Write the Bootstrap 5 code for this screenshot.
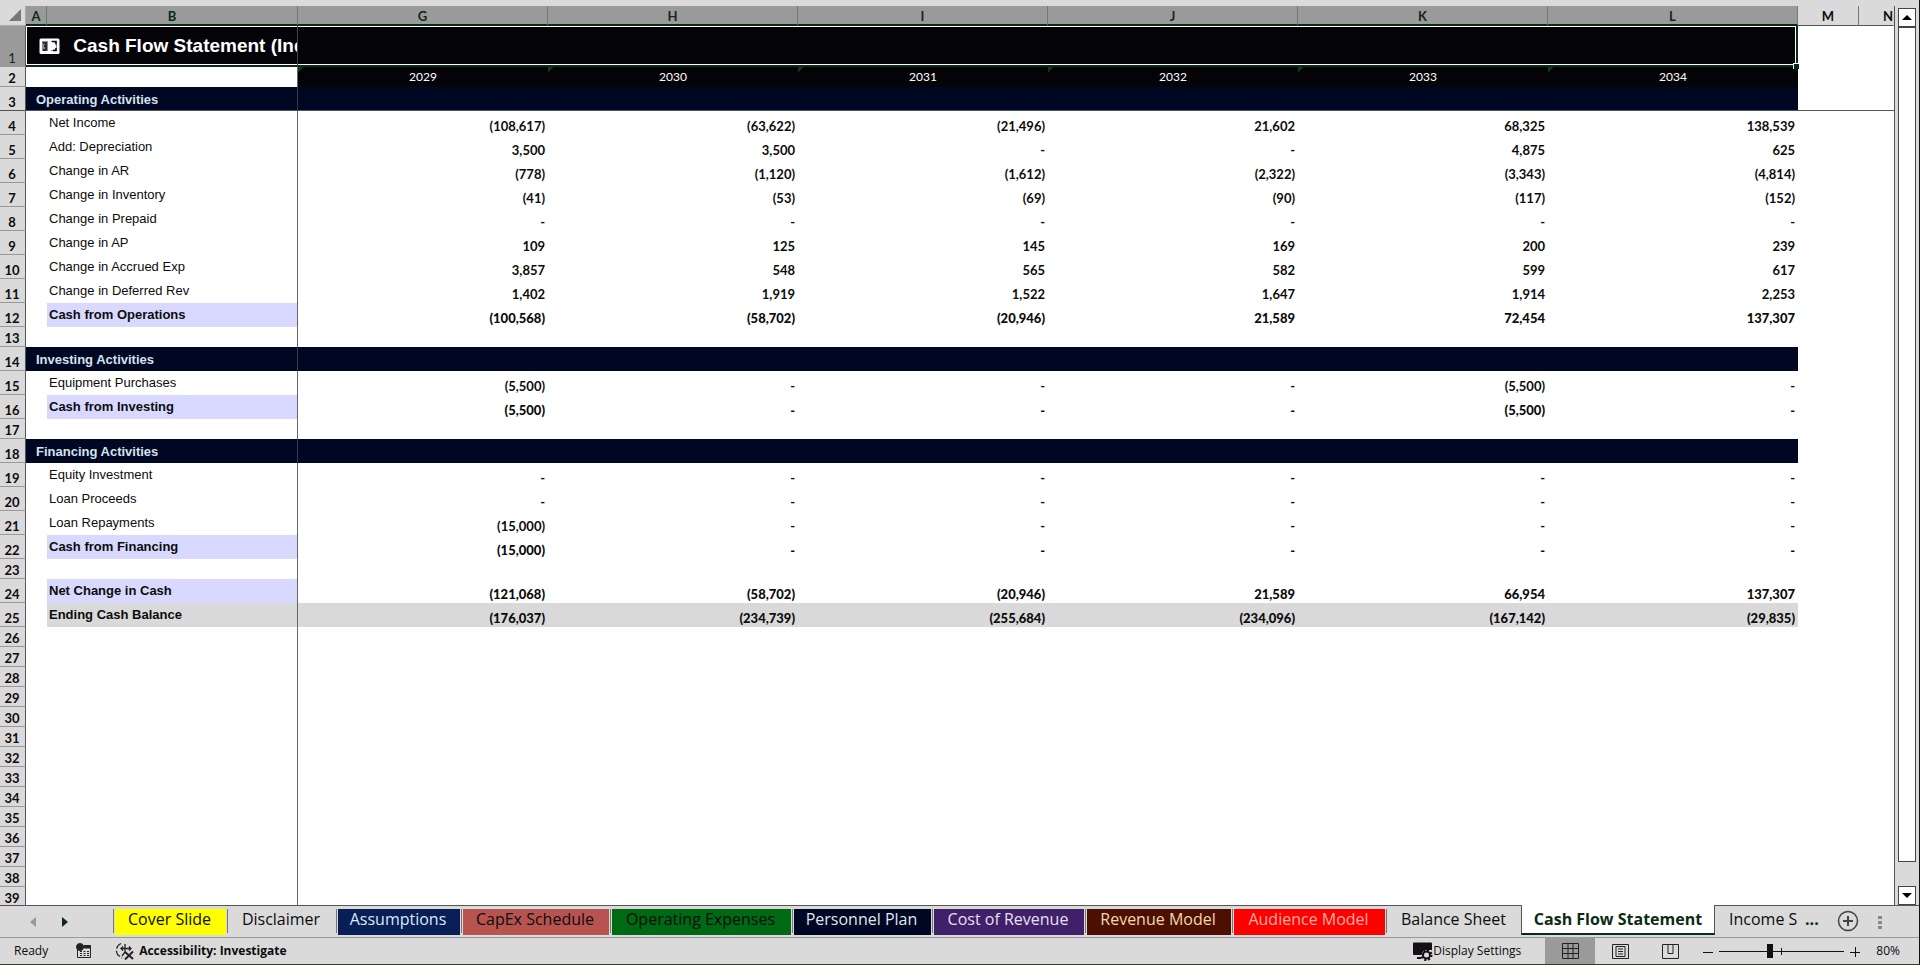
<!DOCTYPE html>
<html lang="en">
<head>
<meta charset="utf-8">
<meta name="viewport" content="width=device-width, initial-scale=1">
<title>Cash Flow Statement</title>
<link href="https://cdn.jsdelivr.net/npm/bootstrap@5.3.0/dist/css/bootstrap.min.css" rel="stylesheet">
<style>
body{background:#dadada;color:#0c0c0c;font-family:"Open Sans","Noto Sans",sans-serif;line-height:1}
.app{height:100vh;border-bottom:1px solid #3c3c1e;border-right:1px solid #111}
.strip{height:6px}
.grid-pane{min-height:0}
.sheet-view{min-width:0}
.sheet-body{width:100%;table-layout:fixed;border-collapse:separate;border-spacing:0;background:#fff;font:700 13px/16px Lato,sans-serif}
.sheet-body th,.sheet-body td{padding:0;white-space:nowrap;overflow:hidden}
.c-num{width:26px}.c-a{width:21px}.c-b{width:251px}.c-m{width:61px}.c-n{width:35px}
.sheet-body thead th{height:20px;background:#dadada;border-right:1px solid #777;border-bottom:1px solid #555;text-align:center;line-height:17px;vertical-align:bottom}
.sheet-body thead th.sel{background:#9a9a9a;color:#0b2b14;border-bottom:2px solid #0b2b14;line-height:16px}
.sheet-body thead th:last-child{border-right:1px solid #dadada}
.sheet-body thead th.corner{border-right-color:#aaa;border-bottom-color:#aaa}
.sheet-body tbody th{background:#dadada;border-right:1px solid #555;border-bottom:1px solid #999;text-align:center;vertical-align:bottom;line-height:15px;padding-right:1px}
.sheet-body .title-row th{background:#9a9a9a;color:#0b2b14;font-weight:400}
.sheet-body tbody tr{height:24px}
.sheet-body tbody tr.gap-row{height:20px}
.sheet-body tbody tr.title-row{height:41px}
.sheet-body tbody td{text-align:right;vertical-align:bottom;padding:0 3px 1px 0;line-height:15px}
.sheet-body tbody td.lbl{font:400 13px/16px "Liberation Sans",sans-serif;text-align:left;vertical-align:top;padding:4px 0 0 2px}
.sheet-body .b-edge{border-right:1px solid #666}
.sheet-body .total td.lbl,.sheet-body .ending td.lbl{font-weight:700}
.sheet-body .total td.lbl{background:#d9d9ff}
.sheet-body .total td.n,.sheet-body .ending td.n{font-weight:900}
.sheet-body .ending td.lbl,.sheet-body .ending td.n{background:#d9d9d9}
.sheet-body .band td.n,.sheet-body .band td.band-title{background:#000722}
.sheet-body tbody td.band-title{font:700 13px/16px "Liberation Sans",sans-serif;color:#d5e2ee;text-align:left;vertical-align:top;padding:5px 0 0 10px;border-right-color:#333a50}
.sheet-body .freeze td,.sheet-body .freeze th{border-bottom:1px solid #555}
.sheet-body .title-row td.t{background:#040308;border-bottom:2px solid #0b2b14;box-shadow:inset 0 1px #fff,inset 0 -1px #fff}
.sheet-body tbody .title-row td.t-first,.sheet-body tbody td.t-first{box-shadow:inset 1px 1px #fff,inset 0 -1px #fff;border-right-color:#444;padding:0 0 0 13px;text-align:left;vertical-align:middle;color:#fff;font:700 19px/24px "Liberation Sans",sans-serif}
.sheet-body .title-row td.t-last{box-shadow:inset 0 1px #fff,inset -1px -1px #fff;border-right:2px solid #0b2b14;overflow:visible}
.sheet-body tbody .years td.n{background:#040308 linear-gradient(135deg,#0b3b18 4px,transparent 4px);color:#fff;font:400 12px/18px Lato,sans-serif;text-align:center;vertical-align:middle;padding:0}
.fill-handle{right:-3px;bottom:-4px;width:6px;height:6px;background:#0b2b14;border:1px solid #fff;border-width:1px 0 0 1px;z-index:1}
.vbar{width:25px;padding:2px 3px 0 3px;border-left:1px solid #555}
.vbar button{height:19px;border:1px solid #444;background:#fff}
.thumb{border:1px solid #444;background:#fff;flex:0 1 835px}
.tabbar{height:32px;border-top:1px solid #555;padding-left:112px;font-size:16px}
.tabbar .tab{height:26px;margin:3px 0 0;border:0;background:transparent;color:#0c0c0c;white-space:nowrap;line-height:20px;padding:0 2px 6px 0;text-align:center;flex-shrink:0}
.sep{width:1px;height:24px;margin:3px 1px 0 1px;background:#777;flex-shrink:0}
.navs{left:26px;top:11px;width:46px}
.tabbar .w-cover{width:111px;background:#ff0}
.tabbar .w-disc{width:106px}
.tabbar .w-assu{width:122px;background:#081e54;color:#dbe8f8}
.tabbar .w-cap{width:146px;background:#b85450}
.tabbar .w-op{width:179px;background:#006914}
.tabbar .w-pers{width:137px;background:#000722;color:#dfe6f0}
.tabbar .w-cost{width:150px;background:#402068;color:#e4e0f0}
.tabbar .w-rev{width:144px;background:#4c0f00;color:#f0d8b0}
.tabbar .w-aud{width:151px;background:#f00;color:#ffb0a0}
.tabbar .w-bal{width:133px}
.tabbar .w-cash{width:194px;margin-top:-1px;height:30px;background:#fff;border:1px solid #555;border-top:0;border-bottom:2px solid #0b2b14;color:#0b2b14;font-weight:700;line-height:27px;padding:0}
.tabbar .w-inc{width:82px;padding-left:14px;overflow:hidden;text-align:left}
.tabbar .more{color:#0b2b14;font-weight:700}
.statusbar{height:27px;border-top:1px solid #999;font-size:12px;padding:0 19px 0 14px}
.statusbar button{border:0;background:transparent;padding:0;color:inherit;height:26px;white-space:nowrap}
.statusbar .view{width:50px}
.statusbar .view.on{background:#9a9a9a}
.statusbar .rec{margin-left:28px}
.statusbar .acc{margin-left:23px}
.zoomer{appearance:none;width:125px;height:14px;margin:0 6px;background:linear-gradient(#111,#111) 62px 50%/1px 7px no-repeat,linear-gradient(#111,#111) 0 50%/100% 1px no-repeat}
.zoomer::-webkit-slider-thumb{appearance:none;width:6px;height:14px;background:#111}
</style>
</head>
<body>
<div class="app d-flex flex-column overflow-hidden">
  <div class="strip flex-shrink-0"></div>
  <main class="grid-pane d-flex flex-grow-1">
    <div class="sheet-view flex-grow-1 overflow-hidden bg-white">
      <table class="sheet-body">
        <colgroup><col class="c-num"><col class="c-a"><col class="c-b"><col><col><col><col><col><col><col class="c-m"><col class="c-n"></colgroup>
        <thead><tr>
          <th class="corner"><svg class="d-block ms-auto me-1 mb-1" width="12" height="12"><path d="M12 0V12H0z" fill="#777"/></svg></th>
          <th class="sel">A</th><th class="sel">B</th><th class="sel">G</th><th class="sel">H</th><th class="sel">I</th><th class="sel">J</th><th class="sel">K</th><th class="sel">L</th><th>M</th><th class="text-end">N</th>
        </tr></thead>
        <tbody id="rows">
          <tr class="title-row"><th>1</th>
            <td class="t t-first b-edge" colspan="2"><svg class="me-2 align-middle" width="21" height="17" viewBox="0 0 21 17"><rect x=".5" y=".5" width="20" height="15.500" rx="1.500" fill="#fff"/><path d="M3 3h6v10H3zM12 3h6v10h-6z" fill="#8a8a8a"/><path d="M11 4h2a4 4 0 0 1 0 8h-2z" fill="#fff"/><path d="M4 5h3v3H5M7 8v4H4M13 3.500h4v3M17 10v2.500h-3" fill="none" stroke="#111" stroke-width="1.500"/></svg> Cash Flow Statement (Ind</td>
            <td class="t"></td><td class="t"></td><td class="t"></td><td class="t"></td><td class="t"></td><td class="t t-last position-relative"><i class="fill-handle position-absolute"></i></td><td></td><td></td></tr>
        </tbody>
      </table>
    </div>
    <div class="vbar d-flex flex-column flex-shrink-0">
      <button class="p-0 d-flex flex-shrink-0 align-items-center justify-content-center" aria-label="Scroll up"><svg width="10" height="6"><path d="M5 0l5 5H0z"/></svg></button>
      <div class="thumb"></div>
      <button class="p-0 mt-auto d-flex flex-shrink-0 align-items-center justify-content-center" aria-label="Scroll down"><svg width="10" height="6"><path d="M0 0h10L5 5z"/></svg></button>
    </div>
  </main>
  <nav class="tabbar d-flex flex-shrink-0 position-relative" aria-label="Sheets">
    <div class="navs position-absolute d-flex justify-content-between px-1">
      <svg width="6" height="10"><path d="M6 0v10L0 5z" fill="#999"/></svg>
      <svg width="6" height="10"><path d="M0 0v10l6-5z" fill="#0b2b14"/></svg>
    </div>
    <i class="sep"></i><button class="tab w-cover">Cover Slide</button><i class="sep"></i>
    <button class="tab w-disc">Disclaimer</button><i class="sep"></i>
    <button class="tab w-assu">Assumptions</button><i class="sep"></i>
    <button class="tab w-cap">CapEx Schedule</button><i class="sep"></i>
    <button class="tab w-op">Operating Expenses</button><i class="sep"></i>
    <button class="tab w-pers">Personnel Plan</button><i class="sep"></i>
    <button class="tab w-cost">Cost of Revenue</button><i class="sep"></i>
    <button class="tab w-rev">Revenue Model</button><i class="sep"></i>
    <button class="tab w-aud">Audience Model</button><i class="sep"></i>
    <button class="tab w-bal">Balance Sheet</button>
    <button class="tab w-cash">Cash Flow Statement</button>
    <button class="tab w-inc">Income S</button>
    <button class="tab more ms-2">...</button>
    <button class="tab ms-3" aria-label="New sheet"><svg width="22" height="22" fill="none" stroke="#444"><circle cx="11" cy="11" r="9.500" stroke-width="1.500"/><path d="M11 6v10M6 11h10" stroke-width="2"/></svg></button>
    <svg class="ms-3 mt-2 flex-shrink-0" width="10" height="18" fill="#888"><path d="M1 2h4v3H1zM1 7h4v3H1zM1 12h4v3H1z"/></svg>
  </nav>
  <footer class="statusbar d-flex align-items-center flex-shrink-0">
    <span>Ready</span>
    <button class="rec" aria-label="Record macro"><svg width="16" height="16" fill="none" stroke="#222"><path d="M1.500 7v7.500h13V2.500H8M2 14.500h12" /><path d="M8 3h6.500v2H8z" fill="#222"/><path d="M4 8.500h2m1.500 0h2m1.500 0h2M4 10.500h2m1.500 0h2m1.500 0h2M4 12.500h2m1.500 0h2m1.500 0h2"/><circle cx="4" cy="4" r="3.500" fill="#222"/></svg></button>
    <button class="acc d-flex align-items-center fw-bold"><svg class="me-1" width="20" height="18" fill="none" stroke="#222" stroke-width="1.300"><path d="M6 1.500A7.500 7.500 0 0 0 3 13l4 3" stroke-dasharray="7 2"/><path d="M6 6.500h10M10 2v8l-3 4M8 4.500L6 6.500l2 2M14 4.500l2 2-2 2"/><path d="M10 10l8 7M18 9.500l-8 8" stroke-width="2"/></svg>Accessibility: Investigate</button>
    <button class="ms-auto me-4 d-flex align-items-center"><svg width="21" height="20"><path d="M1 2.500a1 1 0 0 1 1-1h17a1 1 0 0 1 1 1V9h-8l-3 5H2a1 1 0 0 1-1-1zM5 16h4v2H5z" fill="#151015"/><circle cx="14.500" cy="14" r="3.500" fill="#dadada" stroke="#151015" stroke-width="2"/><circle cx="14.500" cy="14" r="5" fill="none" stroke="#151015" stroke-width="2" stroke-dasharray="2 1.930"/></svg>Display Settings</button>
    <button class="view on" aria-label="Normal view"><svg width="17" height="16" fill="none" stroke="#222"><path d="M.5.5h16v15H.5zM6 .5v15M11 .5v15M0 5.500h17M0 10.500h17"/></svg></button>
    <button class="view" aria-label="Page layout view"><svg width="17" height="15" fill="none" stroke="#222"><path d="M.5.5h16v14H.5zM4 2.500h9v10H4zM6 5h5M6 7.500h5M6 10h5"/></svg></button>
    <button class="view" aria-label="Page break view"><svg width="17" height="15" fill="none" stroke="#222"><path d="M.5.5h16v14H.5zM6 .5V9.500M11 .5V9.500M6 9.500h5"/></svg></button>
    <button class="ms-2" aria-label="Zoom out"><svg width="10" height="10" stroke="#111"><path d="M0 5.500h10"/></svg></button>
    <input class="zoomer" type="range" min="0" max="100" value="40" aria-label="Zoom">
    <button class="me-3" aria-label="Zoom in"><svg width="10" height="10" stroke="#111"><path d="M0 5.500h10M5.500 0v10"/></svg></button>
    <span>80%</span>
  </footer>
</div>
<script>
const D = ['-','-','-','-','-','-'];
const sheet = [
  ['years', '', ['2029','2030','2031','2032','2033','2034']],
  ['band freeze', 'Operating Activities'],
  ['line', 'Net Income', ['(108,617)','(63,622)','(21,496)','21,602','68,325','138,539']],
  ['line', 'Add: Depreciation', ['3,500','3,500','-','-','4,875','625']],
  ['line', 'Change in AR', ['(778)','(1,120)','(1,612)','(2,322)','(3,343)','(4,814)']],
  ['line', 'Change in Inventory', ['(41)','(53)','(69)','(90)','(117)','(152)']],
  ['line', 'Change in Prepaid', D],
  ['line', 'Change in AP', ['109','125','145','169','200','239']],
  ['line', 'Change in Accrued Exp', ['3,857','548','565','582','599','617']],
  ['line', 'Change in Deferred Rev', ['1,402','1,919','1,522','1,647','1,914','2,253']],
  ['total', 'Cash from Operations', ['(100,568)','(58,702)','(20,946)','21,589','72,454','137,307']],
  ['gap-row'],
  ['band', 'Investing Activities'],
  ['line', 'Equipment Purchases', ['(5,500)','-','-','-','(5,500)','-']],
  ['total', 'Cash from Investing', ['(5,500)','-','-','-','(5,500)','-']],
  ['gap-row'],
  ['band', 'Financing Activities'],
  ['line', 'Equity Investment', D],
  ['line', 'Loan Proceeds', D],
  ['line', 'Loan Repayments', ['(15,000)','-','-','-','-','-']],
  ['total', 'Cash from Financing', ['(15,000)','-','-','-','-','-']],
  ['gap-row'],
  ['total', 'Net Change in Cash', ['(121,068)','(58,702)','(20,946)','21,589','66,954','137,307']],
  ['ending', 'Ending Cash Balance', ['(176,037)','(234,739)','(255,684)','(234,096)','(167,142)','(29,835)']]
];
while (sheet.length < 38) sheet.push(['gap-row']);
document.getElementById('rows').insertAdjacentHTML('beforeend', sheet.map(([kind, label = '', vals = ['','','','','','']], i) => {
  const rowKind = kind === 'years' ? 'years gap-row' : kind;
  const head = kind.startsWith('band')
    ? `<td class="band-title b-edge" colspan="2">${label}</td>`
    : `<td></td><td class="${label ? 'lbl ' : ''}b-edge">${label}</td>`;
  return `<tr class="${rowKind}"><th scope="row">${i + 2}</th>${head}${vals.map(v => `<td class="n">${v}</td>`).join('')}<td></td><td></td></tr>`;
}).join(''));
</script>
<script src="https://cdn.jsdelivr.net/npm/bootstrap@5.3.0/dist/js/bootstrap.bundle.min.js"></script>
</body>
</html>
